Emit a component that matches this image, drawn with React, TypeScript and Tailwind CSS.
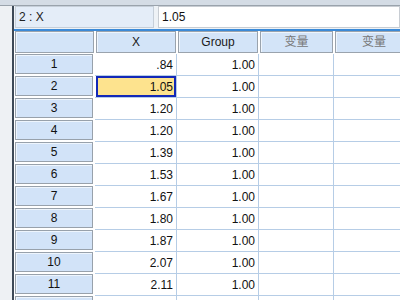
const xs = ['.84', '1.05', '1.20', '1.20', '1.39', '1.53', '1.67', '1.80', '1.87', '2.07', '2.11', ''];

function HeadCell({ w, label, muted }: { w: string; label: string; muted?: boolean }) {
  return (
    <div className={`${w} h-full shrink-0 pl-[1px] pr-[1px] pb-[1px]`}>
      <div
        className={`h-full border border-[#9aa3ad] bg-[#d3e4f8] shadow-[inset_1px_1px_0_#eef5fd] flex items-center justify-center ${
          muted ? 'text-[#777]' : 'text-[#1a1a1a]'
        }`}
      >
        {label}
      </div>
    </div>
  );
}

export default function App() {
  return (
    <div className="w-[400px] h-[300px] overflow-hidden bg-white text-[12px] font-['Liberation_Sans','Noto_Sans_CJK_SC',sans-serif] flex flex-col">
      <div className="h-[6px] shrink-0 bg-[#d4dce5] border-b border-[#9aa3ac]" />
      <div className="flex flex-1 min-h-0">
        <div className="w-[12px] shrink-0 bg-[#eef1f4]" />
        <div className="w-[2px] shrink-0 bg-[#3d4957]" />
        <div className="flex-1 flex flex-col min-w-0">
          {/* formula bar */}
          <div className="h-[23px] shrink-0 flex bg-[#eef2f6] pl-[1px] pb-[1px]">
            <div className="w-[139px] h-full bg-[#e4edf8] border border-[#c6cfd9] flex items-center pl-[3px] text-[#222]">
              2 : X
            </div>
            <div className="ml-[4px] flex-1 h-full bg-white border border-[#c8cdd3] flex items-center pl-[3px] text-[#111]">
              1.05
            </div>
          </div>
          <div className="h-[2px] shrink-0 bg-[#3b8ad8]" />
          {/* header row */}
          <div className="h-[23px] shrink-0 flex">
            <HeadCell w="w-[81px]" label="" />
            <HeadCell w="w-[82px]" label="X" />
            <HeadCell w="w-[82px]" label="Group" />
            <HeadCell w="w-[75px]" label="变量" muted />
            <HeadCell w="w-[80px]" label="变量" muted />
          </div>
          {/* rows */}
          {xs.map((x, i) => (
            <div key={i} className="h-[22px] shrink-0 flex">
              <div className="w-[81px] shrink-0 pl-[1px]">
                <div className="h-[20px] w-[78px] border border-[#98a1ab] bg-[#d2e3f8] shadow-[inset_1px_1px_0_#eef5fd] flex items-center justify-center text-[#111]">
                  {x ? i + 1 : ''}
                </div>
              </div>
              <div className="w-[82px] shrink-0 border-r border-b border-[#b6cde6] pl-[1px]">
                {i === 1 ? (
                  <div className="h-full w-[80px] bg-[#fde38e] border-2 border-[#1228b8] flex items-center justify-end pr-[1px] text-[#111]">
                    {x}
                  </div>
                ) : (
                  <div className="h-full flex items-center justify-end pr-[3px] text-[#111]">{x}</div>
                )}
              </div>
              <div className="w-[82px] shrink-0 border-r border-b border-[#b6cde6] flex items-center justify-end pr-[3px] text-[#111]">
                {x ? '1.00' : ''}
              </div>
              <div className="w-[75px] shrink-0 border-r border-b border-[#b6cde6]" />
              <div className="flex-1 border-b border-[#b6cde6]" />
            </div>
          ))}
        </div>
      </div>
    </div>
  );
}
